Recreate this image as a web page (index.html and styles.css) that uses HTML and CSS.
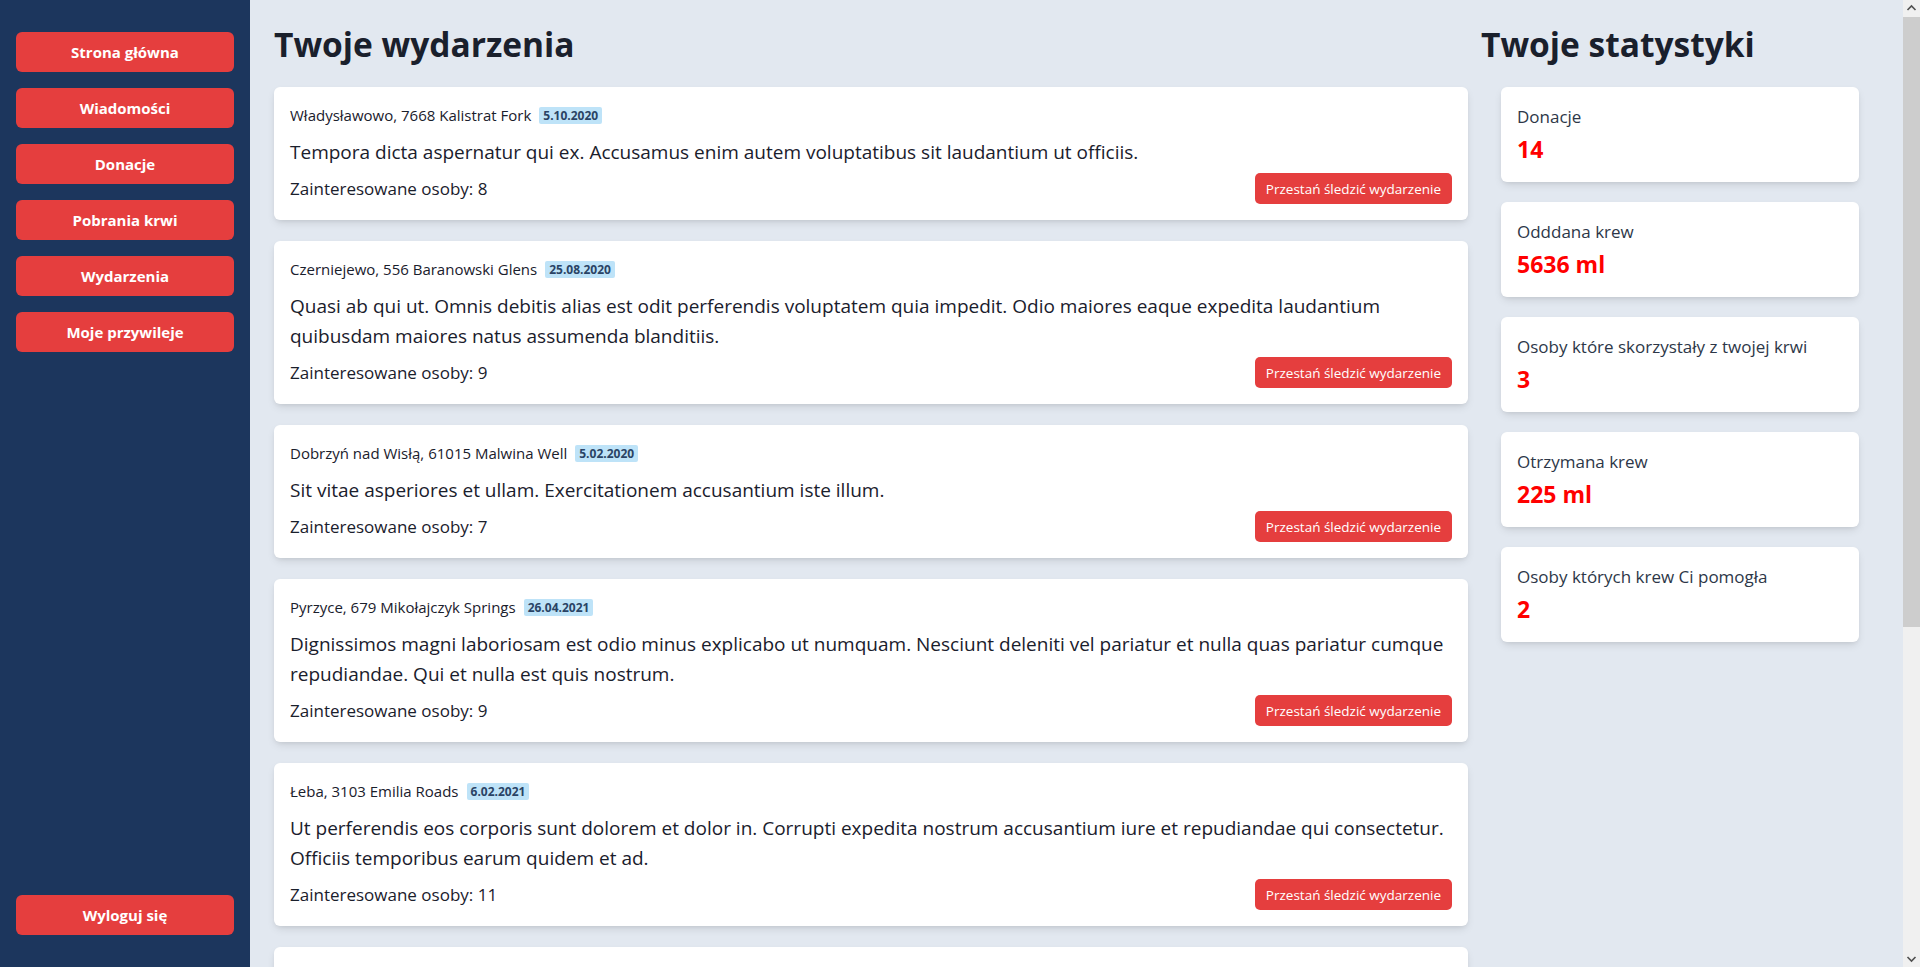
FILE: index.html
```html
<!DOCTYPE html>
<html lang="pl">
<head>
<meta charset="utf-8">
<title>Twoje wydarzenia</title>
<link rel="stylesheet" href="styles.css">
</head>
<body>
<div class="layout">
  <aside class="sidebar">
    <nav class="nav">
      <a class="nav-btn" href="#">Strona główna</a>
      <a class="nav-btn" href="#">Wiadomości</a>
      <a class="nav-btn" href="#">Donacje</a>
      <a class="nav-btn" href="#">Pobrania krwi</a>
      <a class="nav-btn" href="#">Wydarzenia</a>
      <a class="nav-btn" href="#">Moje przywileje</a>
    </nav>
    <a class="nav-btn" href="#">Wyloguj się</a>
  </aside>
  <main class="main">
    <section class="events">
      <h1 class="title">Twoje wydarzenia</h1>
      <div class="event-list">
        <article class="card event">
          <div class="meta">Władysławowo, 7668 Kalistrat Fork <span class="badge">5.10.2020</span></div>
          <p class="desc">Tempora dicta aspernatur qui ex. Accusamus enim autem voluptatibus sit laudantium ut officiis.</p>
          <div class="event-foot"><span class="people">Zainteresowane osoby: 8</span><button class="unfollow">Przestań śledzić wydarzenie</button></div>
        </article>
        <article class="card event">
          <div class="meta">Czerniejewo, 556 Baranowski Glens <span class="badge">25.08.2020</span></div>
          <p class="desc">Quasi ab qui ut. Omnis debitis alias est odit perferendis voluptatem quia impedit. Odio maiores eaque expedita laudantium quibusdam maiores natus assumenda blanditiis.</p>
          <div class="event-foot"><span class="people">Zainteresowane osoby: 9</span><button class="unfollow">Przestań śledzić wydarzenie</button></div>
        </article>
        <article class="card event">
          <div class="meta">Dobrzyń nad Wisłą, 61015 Malwina Well <span class="badge">5.02.2020</span></div>
          <p class="desc">Sit vitae asperiores et ullam. Exercitationem accusantium iste illum.</p>
          <div class="event-foot"><span class="people">Zainteresowane osoby: 7</span><button class="unfollow">Przestań śledzić wydarzenie</button></div>
        </article>
        <article class="card event">
          <div class="meta">Pyrzyce, 679 Mikołajczyk Springs <span class="badge">26.04.2021</span></div>
          <p class="desc">Dignissimos magni laboriosam est odio minus explicabo ut numquam. Nesciunt deleniti vel pariatur et nulla quas pariatur cumque repudiandae. Qui et nulla est quis nostrum.</p>
          <div class="event-foot"><span class="people">Zainteresowane osoby: 9</span><button class="unfollow">Przestań śledzić wydarzenie</button></div>
        </article>
        <article class="card event">
          <div class="meta">Łeba, 3103 Emilia Roads <span class="badge">6.02.2021</span></div>
          <p class="desc">Ut perferendis eos corporis sunt dolorem et dolor in. Corrupti expedita nostrum accusantium iure et repudiandae qui consectetur. Officiis temporibus earum quidem et ad.</p>
          <div class="event-foot"><span class="people">Zainteresowane osoby: 11</span><button class="unfollow">Przestań śledzić wydarzenie</button></div>
        </article>
        <article class="card event">
          <div class="meta">Kołobrzeg, 218 Wróbel Crossing <span class="badge">14.03.2021</span></div>
          <p class="desc">Voluptas et quia facilis dolorem. Aut cumque non ipsam sit quibusdam ut. Eveniet omnis sed rerum et autem quos voluptatem sint enim nostrum ea.</p>
          <div class="event-foot"><span class="people">Zainteresowane osoby: 6</span><button class="unfollow">Przestań śledzić wydarzenie</button></div>
        </article>
        <article class="card event">
          <div class="meta">Sopot, 42 Kowalska Ridge <span class="badge">3.06.2021</span></div>
          <p class="desc">Et rerum quia sint enim. Molestiae dolor nihil quod aut.</p>
          <div class="event-foot"><span class="people">Zainteresowane osoby: 4</span><button class="unfollow">Przestań śledzić wydarzenie</button></div>
        </article>
        <article class="card event">
          <div class="meta">Gniezno, 9120 Zielińska Vista <span class="badge">19.09.2021</span></div>
          <p class="desc">Nam eum voluptatem similique ut. Rerum dignissimos tempora est sunt qui. Nihil voluptate natus doloribus fugiat officiis asperiores ullam laboriosam dolorem.</p>
          <div class="event-foot"><span class="people">Zainteresowane osoby: 10</span><button class="unfollow">Przestań śledzić wydarzenie</button></div>
        </article>
      </div>
    </section>
    <section class="stats">
      <h1 class="title">Twoje statystyki</h1>
      <div class="stat-list">
        <div class="card stat"><div class="stat-label">Donacje</div><div class="stat-value">14</div></div>
        <div class="card stat"><div class="stat-label">Odddana krew</div><div class="stat-value">5636 ml</div></div>
        <div class="card stat"><div class="stat-label">Osoby które skorzystały z twojej krwi</div><div class="stat-value">3</div></div>
        <div class="card stat"><div class="stat-label">Otrzymana krew</div><div class="stat-value">225 ml</div></div>
        <div class="card stat"><div class="stat-label">Osoby których krew Ci pomogła</div><div class="stat-value">2</div></div>
      </div>
    </section>
  </main>
</div>
<div class="scrollbar" aria-hidden="true">
  <svg class="sb-arrow" width="17" height="17" viewBox="0 0 17 17"><polyline points="4.5,10 8.5,6 12.5,10" fill="none" stroke="#505050" stroke-width="1.6"/></svg>
  <div class="sb-track"><div class="sb-thumb"></div></div>
  <svg class="sb-arrow" width="17" height="17" viewBox="0 0 17 17"><polyline points="4.5,7 8.5,11 12.5,7" fill="none" stroke="#505050" stroke-width="1.6"/></svg>
</div>
</body>
</html>
```
FILE: styles.css
```css
* { box-sizing: border-box; }
html, body { margin: 0; padding: 0; }
body {
  font-family: "Open Sans", "Noto Sans", sans-serif;
  background: #e2e8f0;
  color: #1a202c;
}
.layout { display: flex; align-items: flex-start; margin-right: 17px; }
.scrollbar {
  position: fixed;
  top: 0;
  right: 0;
  width: 17px;
  height: 100vh;
  background: #f0f0f0;
  display: flex;
  flex-direction: column;
}
.sb-arrow { display: block; flex: 0 0 17px; }
.sb-track { flex: 1; }
.sb-thumb { height: 610px; background: #cdcdcd; }
.sidebar {
  position: sticky;
  top: 0;
  flex: 0 0 250px;
  width: 250px;
  height: 100vh;
  background: #1c365d;
  padding: 32px 16px;
  display: flex;
  flex-direction: column;
  justify-content: space-between;
}
.nav { display: flex; flex-direction: column; gap: 16px; }
.nav-btn {
  display: flex;
  align-items: center;
  justify-content: center;
  height: 40px;
  background: #e53e3e;
  color: #fff;
  font-weight: 700;
  font-size: 15px;
  text-decoration: none;
  border-radius: 6px;
}
.main {
  flex: 1;
  display: grid;
  grid-template-columns: 3fr 1fr;
  column-gap: 13px;
  padding: 24px;
}
.title {
  margin: 0 0 23px;
  font-size: 33.5px;
  line-height: 40px;
  font-weight: 700;
  color: #1a202c;
}
.event-list { display: flex; flex-direction: column; gap: 21px; }
.card {
  background: #fff;
  border-radius: 6px;
  box-shadow: 0 4px 10px -2px rgba(0,0,0,0.12), 0 2px 4px -1px rgba(0,0,0,0.06);
}
.event { padding: 16px; }
.meta {
  font-size: 15px;
  line-height: 24px;
  display: flex;
  align-items: center;
}
.badge {
  margin-left: 8px;
  background: #bee3f8;
  color: #2a4365;
  font-size: 12px;
  font-weight: 700;
  line-height: 17px;
  padding: 0 4px;
  border-radius: 2px;
}
.desc {
  margin: 10px 0 6px;
  font-size: 19px;
  line-height: 30px;
}
.event-foot {
  display: flex;
  justify-content: space-between;
  align-items: center;
}
.people { font-size: 17px; line-height: 28px; }
.unfollow {
  font-family: inherit;
  font-size: 13.5px;
  height: 31px;
  padding: 0 11px;
  background: #e53e3e;
  color: #fff;
  border: 0;
  border-radius: 5px;
}
.stat-list {
  display: flex;
  flex-direction: column;
  gap: 20px;
  padding: 0 20px;
}
.stat { padding: 16px; height: 95px; }
.stat-label { font-size: 17px; line-height: 28px; color: #2d3748; }
.stat-value {
  margin-top: 2px;
  font-size: 23px;
  line-height: 32px;
  font-weight: 700;
  color: #ff0000;
}
```
